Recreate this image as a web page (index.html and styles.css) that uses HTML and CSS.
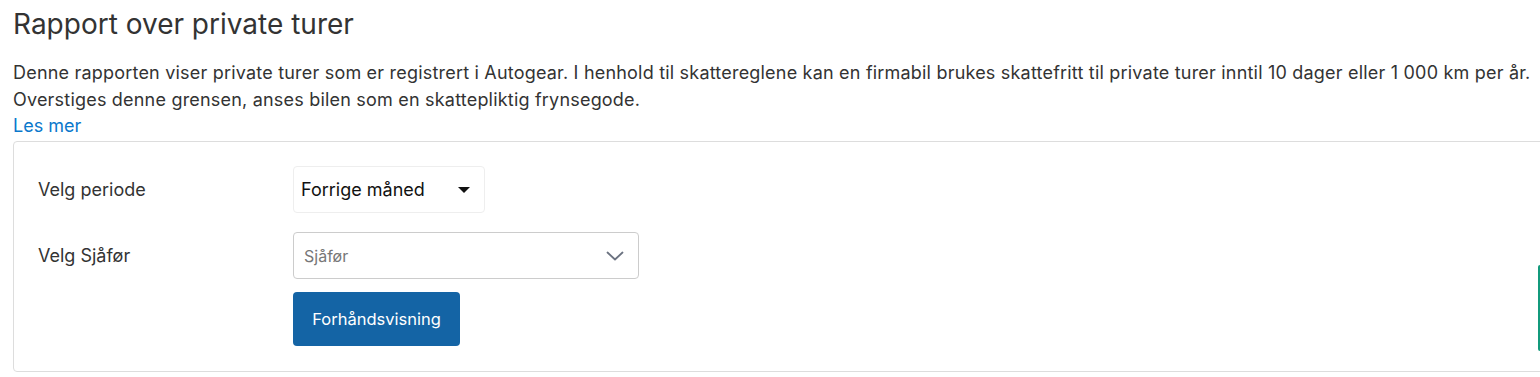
FILE: index.html
```html
<!DOCTYPE html>
<html>
	<head>
		<meta charset="utf-8">
		<title>Rapport over private turer</title>
		<link rel="stylesheet" href="styles.css">
	</head>
	<body>
		<div class="page">
			<h1 class="title">Rapport over private turer</h1>
			<p class="intro">Denne rapporten viser private turer som er registrert i Autogear. I henhold til skattereglene kan en firmabil brukes skattefritt til private turer inntil 10 dager eller 1 000 km per år. Overstiges denne grensen, anses bilen som en skattepliktig frynsegode.</p>
			<a class="more" href="#">Les mer</a>

			<div class="card">
				<div class="row">
					<label class="label">Velg periode</label>
					<div class="period">
						<span>Forrige måned</span>
						<span class="caret"></span>
					</div>
				</div>
				<div class="row">
					<label class="label">Velg Sjåfør</label>
					<div class="driver">
						<span>Sjåfør</span>
						<svg width="18" height="10" viewBox="0 0 18 10"><path d="M1.5 1.5 L9 8.5 L16.5 1.5" fill="none" stroke="#6b7280" stroke-width="1.8" stroke-linecap="round" stroke-linejoin="round"/></svg>
					</div>
				</div>
				<div class="row">
					<span class="label"></span>
					<button class="preview">Forhåndsvisning</button>
				</div>
			</div>
		</div>
		<div class="feedback"></div>
	</body>
</html>
```

FILE: styles.css
```css
* {
	margin: 0;
	padding: 0;
	box-sizing: border-box;
}

body {
	font-family: Inter, "Noto Sans", sans-serif;
	color: #333;
	background: #fff;
	overflow: hidden;
}

.page {
	padding: 6px 0 0 13px;
	width: 1560px;
}

.title {
	font-size: 28px;
	font-weight: 400;
	line-height: 36px;
	color: #333;
}

.intro {
	margin-top: 17px;
	font-size: 18px;
	line-height: 27px;
	width: 1526px;
	letter-spacing: 0.2px;
}

.more {
	display: block;
	font-size: 18px;
	line-height: 25px;
	color: #0a78cc;
	text-decoration: none;
}

.card {
	margin-top: 3px;
	border: 1px solid #ddd;
	border-radius: 4px;
	padding: 24px;
	height: 231px;
}

.row {
	display: flex;
	align-items: center;
	margin-bottom: 19px;
}

.label {
	width: 255px;
	font-size: 18px;
	color: #333;
}

.period {
	display: flex;
	align-items: center;
	justify-content: space-between;
	width: 192px;
	height: 47px;
	border: 1px solid #eee;
	border-radius: 4px;
	padding: 0 14px 0 7px;
	font-size: 18px;
	color: #111;
}

.caret {
	width: 0;
	height: 0;
	border-left: 6px solid transparent;
	border-right: 6px solid transparent;
	border-top: 6px solid #111;
}

.driver {
	display: flex;
	align-items: center;
	justify-content: space-between;
	width: 346px;
	height: 47px;
	border: 1px solid #ccc;
	border-radius: 4px;
	padding: 0 14px 0 10px;
	font-size: 16px;
	color: #777;
}

.row:nth-child(2) {
	margin-bottom: 13px;
}

.preview {
	width: 167px;
	height: 54px;
	border: none;
	border-radius: 4px;
	background: #1464a5;
	color: #fff;
	font-family: inherit;
	font-size: 16.5px;
}

.feedback {
	position: fixed;
	right: 0;
	top: 265px;
	width: 2px;
	height: 86px;
	background: #139a7c;
	border-radius: 2px 0 0 2px;
}
```
